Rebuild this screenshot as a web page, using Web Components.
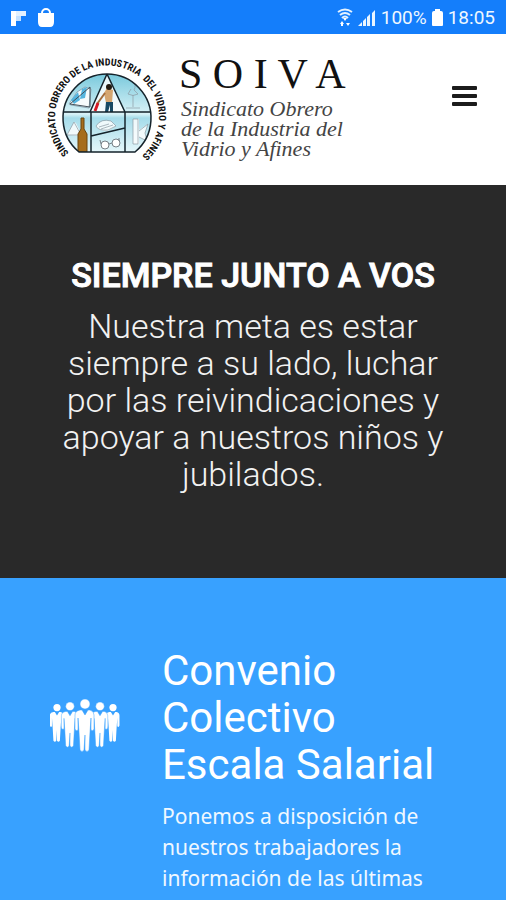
<!DOCTYPE html>
<html lang="es">
<head>
<meta charset="utf-8">
<meta name="viewport" content="width=device-width, initial-scale=1">
<title>SOIVA</title>
<style>
body { margin: 0; background: #38a1ff; font-family: Roboto, sans-serif; overflow-x: hidden; }
</style>
</head>
<body>
<soiva-app></soiva-app>
<script>
const define = (name, html) => customElements.define(name, class extends HTMLElement {
  constructor() {
    super();
    this.attachShadow({ mode: 'open' }).innerHTML = html;
  }
});

define('status-bar', `
<style>
:host { display: flex; justify-content: space-between; align-items: center; height: 34px; padding: 2px 11px 0 10px; box-sizing: border-box; background: #147efb; color: #eef7ff; font: 19px/24px Roboto, sans-serif; }
.group { display: flex; align-items: center; gap: 5px; }
.apps { gap: 10px; }
svg { display: block; }
</style>
<div class="group apps">
  <svg width="17" height="18" viewBox="0 0 17 18" aria-hidden="true"><path fill="#fff" d="M1 2h5v15H1z"/><path fill="#e3f1ff" d="M6 2h10v5H6z"/><path fill="#c3e0ff" d="M6 7h5v5H6z"/></svg>
  <svg width="18" height="20" viewBox="0 0 18 20" aria-hidden="true"><path d="M5 8V5a4 4 0 0 1 8 0v3" fill="none" stroke="#fff" stroke-width="2"/><path fill="#fff" d="M1 5h16v9q0 5-4 5H5q-4 0-4-5z"/></svg>
</div>
<div class="group">
  <svg width="16" height="20" viewBox="0 0 16 20" aria-hidden="true" fill="none" stroke="#e4f2ff" stroke-width="2"><path d="M1 4q7-5 14 0M3 7q5-4 10 0M5 10q3-3 6 0"/><path fill="#fff" stroke="none" d="M8 13l-2-3h4zM3 16l2-3 2 3zM9 15h4l-2 3zM4 15h2v3H4z"/></svg>
  <svg width="18" height="18" viewBox="0 0 18 18" aria-hidden="true" fill="#e9f5ff"><path d="M0 17l4-4v4zM5 12l3-3v8H5zM9 8l3-3v12H9zM14 4l3-3v16h-3z"/></svg>
  <span>100%</span>
  <svg width="11" height="18" viewBox="0 0 11 18" aria-hidden="true" fill="#fff"><path d="M3 0h5v2h1q2 0 2 2v12q0 1-1 1H1q-1 0-1-1V4q0-2 2-2h1z"/></svg>
  <span>18:05</span>
</div>`);

define('union-emblem', `
<style>
:host { display: block; flex: none; }
svg { display: block; }
text { font: 700 10px "Roboto Condensed", "Liberation Sans Narrow", "Liberation Sans", sans-serif; fill: #111; }
</style>
<svg width="120" height="108" viewBox="0 0 120 108" role="img" aria-label="Emblema de SOIVA">
  <defs>
    <clipPath id="disc"><path d="M32 98A44 44 0 1 1 88 98z"/></clipPath>
    <linearGradient id="sky" x1="0" y1="0" x2="0" y2="1"><stop offset="0" stop-color="#79c9dc"/><stop offset=".5" stop-color="#d9f2f7"/><stop offset=".55" stop-color="#a5dcea"/><stop offset="1" stop-color="#e8f8fb"/></linearGradient>
    <path id="ringtext" d="M22 99A52 52 0 1 1 98 99L90 107"/>
  </defs>
  <g clip-path="url(#disc)">
    <path fill="url(#sky)" d="M14 20h92v80H14z"/>
    <path fill="#fff" opacity=".8" d="M60 20L43 58h34z"/>
    <g transform="translate(0 4)">
    <path fill="#f6fbfc" stroke="#8aa7b4" d="M22 46l8-12 8-5 6 2-2 19-18-3z"/>
    <path fill="#55b5df" d="M24 42l7-8 2 8-6 4zM35 31l5-2-2 11-5 1z"/>
    <path d="M23 46l20-17v20z" fill="none" stroke="#45515a"/>
    <path fill="#fff" opacity=".8" d="M20 77l7-13 2 1 6 13zM49 68q5-7 15-5l5 5-8 5q-10 0-12-5zM86 61h6v25h-6zM92 72l9-6-3 9 2 8-8-4z"/>
    <path fill="none" stroke="#8c9ba3" stroke-width=".7" d="M20 77l7-13 7 13zM49 68q5-8 15-5l5 5-8 4q-10 1-12-4M52 69l10-3M54 71l12-4M86 61h5v25h-5zM92 73l9-7-3 9 2 8-8-4M84 31l-3 5q5 3 10 0l-4-4q3-5-2-8M86 37v12m-7 1h14"/>
    <path fill="#a66d1c" stroke="#68450f" d="M34 60h3v11l3 5v18h-9V76l3-5z"/>
    <g fill="#fff" stroke="#778087"><circle cx="58" cy="87" r="4"/><circle cx="69" cy="85" r="4"/><path fill="none" d="M62 86l3-1M54 86l-1-4M72 83v-3"/></g>
    <path fill="#d5a670" d="M57 35l3-5 6 2-1 13h-6z"/><circle cx="62" cy="29" r="3" fill="#22190f"/>
    <path d="M58 35l-8 11" stroke="#a36c3b" stroke-width="2"/><path d="M51 45l-3 8" stroke="#d51a24" stroke-width="3"/>
    <path fill="#174963" d="M59 44h7v10h-3v-7l-2 7h-3z"/>
    </g>
    <path fill="none" stroke="#15232b" stroke-width="1.5" d="M14 58h92M44 58v42M78 58v42M60 20L43 58M60 20L78 58M44 82l34-8"/>
  </g>
  <path fill="none" stroke="#15232b" stroke-width="1.5" d="M32 98A44 44 0 1 1 88 98z"/>
  <text><textPath href="#ringtext">SINDICATO OBRERO DE LA INDUSTRIA&nbsp; DEL VIDRIO Y AFINES</textPath></text>
</svg>`);

define('site-header', `
<style>
:host { display: flex; align-items: center; justify-content: space-between; padding: 20px 29px 23px 47px; background: #fff; color: #111; }
.brand { display: flex; gap: 12px; color: inherit; text-decoration: none; }
.name { display: block; font: 42px/40px "Liberation Serif", serif; white-space: nowrap; }
.full { display: block; font: italic 22px/20px "Liberation Serif", serif; color: #444; white-space: nowrap; padding: 5px 0 0 2px; }
button { display: flex; flex-direction: column; gap: 4px; width: 25px; padding: 0; margin: 0 0 24px; border: 0; background: none; }
i { display: block; height: 4px; border-radius: 1px; background: #1c1c1c; }
</style>
<a class="brand" href="#">
  <union-emblem></union-emblem>
  <span><span class="name">S O I V A</span><span class="full">Sindicato Obrero<br>de la Industria del<br>Vidrio y Afines</span></span>
</a>
<button type="button" aria-label="Menú"><i></i><i></i><i></i></button>`);

define('hero-banner', `
<style>
:host { display: block; padding: 70px 60px 85px; background: #292929; color: #fff; text-align: center; }
::slotted(h1) { margin: 0; font: 500 34px/40px Roboto, sans-serif; -webkit-text-stroke: 1px #fff; }
::slotted(p) { margin: 13px 0 0; font: 300 34px/37px Roboto, sans-serif; color: #f2f2f2; }
</style>
<slot></slot>`);

define('people-icon', `
<style>:host { display: block; } svg { display: block; width: 100%; }</style>
<svg viewBox="0 0 70 54" aria-hidden="true" fill="#fff">
  <defs><g id="person"><circle cx="0" cy="5" r="5"/><path d="M-5 11h2l3 5 3-5h2q4 1 4 5v14q-1 3-3 1V19l-1 14-1 18q-2 3-4 0L0 36l-1 15q-2 3-4 0l-1-18-1-14v12q-2 2-3-1V16q0-4 5-5z"/></g></defs>
  <use href="#person" transform="translate(7 5) scale(.72)"/>
  <use href="#person" transform="translate(63 5) scale(.72)"/>
  <g stroke="#38a1ff" stroke-width=".5"><use href="#person" transform="translate(20 3) scale(.86)"/><use href="#person" transform="translate(50 3) scale(.86)"/><use href="#person" transform="translate(35 0)"/></g>
</svg>`);

define('feature-card', `
<style>
:host { display: grid; grid-template-columns: 70px 1fr; gap: 42px; padding: 69px 50px 5px; background: #38a1ff; color: #fff; }
people-icon { margin-top: 52px; }
::slotted(h2) { margin: 0; font: 400 42px/47px Roboto, sans-serif; }
::slotted(p) { margin: 13px 0 0; font: 21px/31px "Noto Sans", sans-serif; color: #f0f8ff; }
</style>
<people-icon></people-icon>
<div><slot></slot></div>`);

define('soiva-app', `
<style>:host { display: block; }</style>
<status-bar></status-bar>
<site-header></site-header>
<hero-banner>
  <h1>SIEMPRE JUNTO A VOS</h1>
  <p>Nuestra meta es estar siempre a su lado, luchar por las reivindicaciones y apoyar a nuestros niños y jubilados.</p>
</hero-banner>
<feature-card>
  <h2>Convenio Colectivo<br>Escala Salarial</h2>
  <p>Ponemos a disposición de nuestros trabajadores la información de las últimas</p>
</feature-card>`);
</script>
</body>
</html>
